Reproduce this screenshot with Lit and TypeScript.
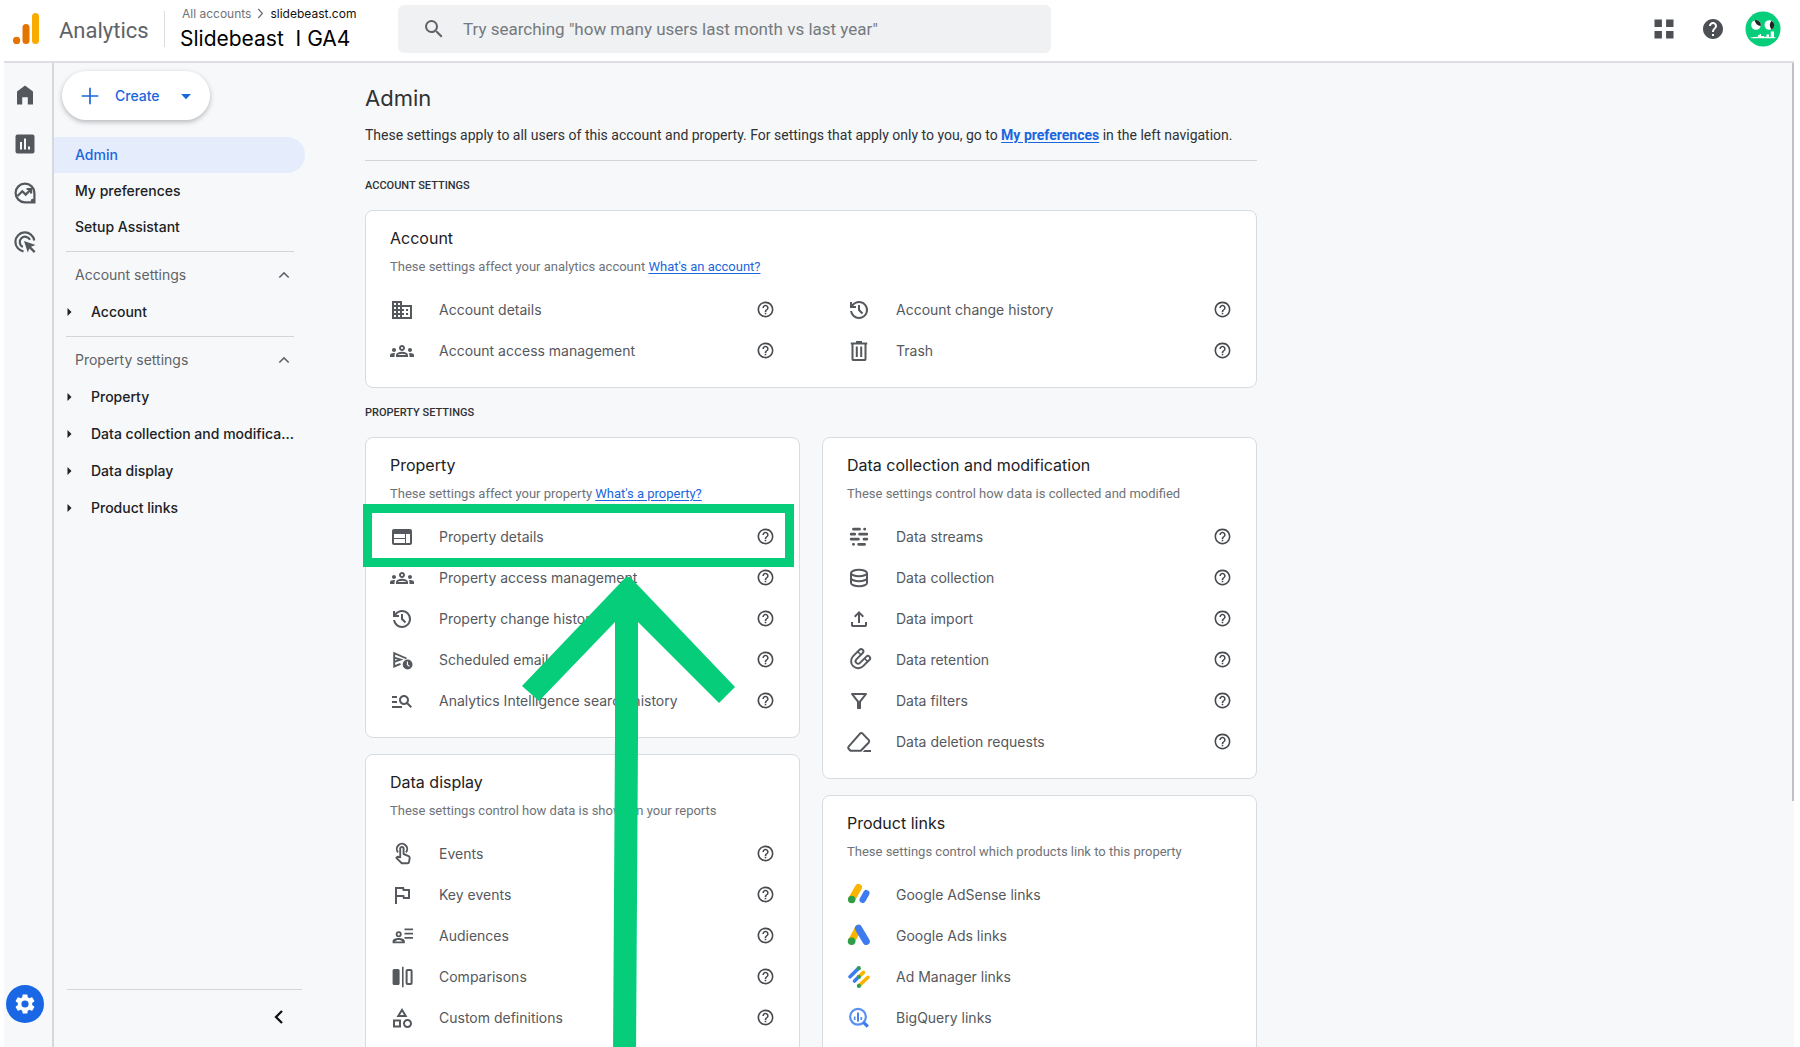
import { LitElement, html, svg, css, nothing, TemplateResult, SVGTemplateResult } from "lit";
import { customElement, property } from "lit/decorators.js";

/* Glyphs on a 24 x 24 grid. */
const ICONS: Record<string, SVGTemplateResult> = {
  home: svg`<path d="M4 21.5V8.6L12 2.5l8 6.1v12.9h-5.2v-7.2H9.200v7.200z"/>`,
  reports: svg`<path fill-rule="evenodd" d="M4.500 2.500h15a2 2 0 0 1 2 2v15a2 2 0 0 1-2 2h-15a2 2 0 0 1-2-2v-15a2 2 0 0 1 2-2zM7 10v7.500h2V10zm4-3.500v11h2v-11zm4 8v3h2v-3z"/>`,
  explore: svg`<g fill="none" stroke="currentColor" stroke-width="2.200"><path d="M12 2.600a9.400 9.400 0 1 0 0 18.800h9.400V12A9.400 9.400 0 0 0 12 2.600z"/><path d="M4.500 15l4.800-4.800 3.400 3.400 5-5.200M13.600 8h4.500v4.500"/></g><circle cx="19.600" cy="19.600" r="1.800"/>`,
  advertising: svg`<g fill="none" stroke="currentColor" stroke-width="2.200"><path d="M10.500 21.300A9.500 9.500 0 1 1 21.300 10.500"/><path d="M9.800 17A5.400 5.400 0 1 1 17 9.800"/></g><path d="M11 11l11.500 4-4.500 1.800 4.500 4.500-1.600 1.600-4.500-4.500-1.600 4.200z"/>`,
  gear: svg`<path fill-rule="evenodd" d="M19.140 12.940c.040-.3.060-.610.060-.940 0-.320-.020-.640-.070-.940l2.030-1.580a.49.49 0 0 0 .12-.61l-1.920-3.320a.488.488 0 0 0-.59-.22l-2.390.96c-.5-.38-1.030-.7-1.620-.94l-.36-2.540a.484.484 0 0 0-.48-.41h-3.840c-.24 0-.43.17-.47.41l-.36 2.540c-.59.24-1.130.57-1.620.94l-2.390-.96c-.22-.08-.47 0-.59.22L2.740 8.870c-.12.21-.08.47.12.61l2.030 1.580c-.05.3-.09.63-.09.94s.02.64.07.94l-2.030 1.580a.49.49 0 0 0-.12.61l1.920 3.320c.12.22.37.29.59.22l2.390-.96c.5.38 1.030.7 1.620.94l.36 2.540c.05.24.24.41.48.41h3.840c.24 0 .44-.17.47-.41l.36-2.540c.59-.24 1.130-.56 1.620-.94l2.390.96c.22.08.47 0 .59-.22l1.920-3.320c.12-.22.07-.47-.12-.61l-2.010-1.580zM12 15.600A3.600 3.600 0 1 1 12 8.400a3.600 3.600 0 0 1 0 7.200z"/>`,
  search: svg`<path d="M15.500 14h-.79l-.28-.27A6.471 6.471 0 0 0 16 9.500 6.500 6.500 0 1 0 9.500 16c1.610 0 3.090-.59 4.230-1.570l.27.28v.79l5 4.990L20.490 19l-4.990-5zm-6 0C7.010 14 5 11.990 5 9.500S7.010 5 9.500 5 14 7.010 14 9.500 11.990 14 9.500 14z"/>`,
  apps: svg`<path d="M2.500 2.500h7.400v7.400H2.500zM14.100 2.500h7.400v7.400h-7.400zM2.500 14.100h7.400v7.400H2.500zM14.100 14.100h7.400v7.400h-7.400z"/>`,
  helpFilled: svg`<path d="M12 2C6.480 2 2 6.480 2 12s4.480 10 10 10 10-4.480 10-10S17.520 2 12 2zm1 17h-2v-2h2v2zm2.070-7.750l-.9.920C13.450 12.900 13 13.500 13 15h-2v-.5c0-1.100.45-2.100 1.170-2.830l1.240-1.260c.37-.36.59-.86.59-1.410 0-1.100-.9-2-2-2s-2 .9-2 2H8c0-2.210 1.790-4 4-4s4 1.790 4 4c0 .88-.36 1.680-.93 2.250z"/>`,
  help: svg`<path d="M11 18h2v-2h-2v2zm1-16C6.480 2 2 6.480 2 12s4.480 10 10 10 10-4.480 10-10S17.520 2 12 2zm0 18c-4.410 0-8-3.590-8-8s3.590-8 8-8 8 3.590 8 8-3.590 8-8 8zm0-14c-2.210 0-4 1.790-4 4h2c0-1.100.9-2 2-2s2 .9 2 2c0 2-3 1.750-3 5h2c0-2.250 3-2.500 3-5 0-2.210-1.790-4-4-4z"/>`,
  plus: svg`<path d="M11 2h2v9h9v2h-9v9h-2v-9H2v-2h9z"/>`,
  caretDown: svg`<path d="M3.500 8.500h17L12 17.500z"/>`,
  caretRight: svg`<path d="M7 4l8 8-8 8z"/>`,
  chevronUp: svg`<path d="M12 7.500l-7 7L6.500 16l5.500-5.500 5.500 5.500 1.500-1.500z"/>`,
  chevronLeft: svg`<path fill="none" stroke="currentColor" stroke-width="3.400" d="M16.500 3l-9 9 9 9"/>`,
  chevronRight: svg`<path fill="none" stroke="currentColor" stroke-width="3.500" d="M6 0l11 12L6 24"/>`,
  building: svg`<path d="M12 7V3H2v18h20V7H12zM6 19H4v-2h2v2zm0-4H4v-2h2v2zm0-4H4V9h2v2zm0-4H4V5h2v2zm4 12H8v-2h2v2zm0-4H8v-2h2v2zm0-4H8V9h2v2zm0-4H8V5h2v2zm10 12h-8v-2h2v-2h-2v-2h2v-2h-2V9h8v10zm-2-8h-2v2h2v-2zm0 4h-2v2h2v-2z"/>`,
  groups: svg`<path d="M4 13c1.100 0 2-.9 2-2s-.9-2-2-2-2 .9-2 2 .9 2 2 2zm1.130 1.100c-.37-.06-.74-.1-1.130-.1-.99 0-1.930.21-2.780.58C.48 14.900 0 15.620 0 16.430V18h4.500v-1.610c0-.83.23-1.610.63-2.290zM20 13c1.100 0 2-.9 2-2s-.9-2-2-2-2 .9-2 2 .9 2 2 2zm4 3.430c0-.81-.48-1.530-1.220-1.850-.85-.37-1.790-.58-2.780-.58-.39 0-.76.04-1.130.1.4.68.63 1.460.63 2.290V18H24v-1.570zm-7.760-2.780c-1.170-.52-2.610-.9-4.240-.9-1.630 0-3.070.39-4.240.9C6.680 14.130 6 15.210 6 16.390V18h12v-1.610c0-1.180-.68-2.260-1.760-2.740zM8.070 16c.09-.23.13-.39.91-.69.97-.38 1.990-.56 3.020-.56s2.050.18 3.020.56c.77.3.81.46.91.69H8.070zM12 8c.55 0 1 .45 1 1s-.45 1-1 1-1-.45-1-1 .45-1 1-1m0-2c-1.660 0-3 1.340-3 3s1.340 3 3 3 3-1.340 3-3-1.340-3-3-3z"/>`,
  history: svg`<path d="M12 21q-3.450 0-6.013-2.288T3.050 13H5.100q.35 2.600 2.313 4.300T12 19q2.925 0 4.963-2.037T19 12t-2.037-4.963T12 5q-1.725 0-3.225.8T6.250 8H9v2H3V4h2v2.350q1.275-1.600 3.113-2.475T12 3q1.875 0 3.513.713t2.850 1.924t1.925 2.850T21 12t-.712 3.513t-1.925 2.850t-2.850 1.925T12 21m2.800-4.800L11 12.400V7h2v4.600l3.200 3.200z"/>`,
  trash: svg`<path d="M6.500 22q-.825 0-1.412-.587T4.500 20V5.500H3.800v-2H9v-1.500h6v1.500h5.200v2h-.7V20q0 .825-.587 1.413T17.500 22zM17.500 5.500h-11V20h11zM8.800 18h2V7.500h-2zm4.400 0h2V7.500h-2z"/>`,
  web: svg`<path d="M20 4H4c-1.100 0-1.990.9-1.990 2L2 18c0 1.100.9 2 2 2h16c1.100 0 2-.9 2-2V6c0-1.100-.9-2-2-2zm-5 14H4v-4h11v4zm0-5H4V9h11v4zm5 5h-4V9h4v9z"/>`,
  scheduled: svg`<path fill="none" stroke="currentColor" stroke-width="1.900" d="M16.500 10.500L4.200 5.200v13.300l6.300-2.600M4.200 9.700l6.300 1.900-6.300 2.200"/><circle cx="17.600" cy="16.500" r="4.900"/><path fill="none" stroke="#fff" stroke-width="1.100" d="M17.400 13.500v3.200l2 1.700"/>`,
  searchList: svg`<path d="M7 9H2V7h5v2zm0 3H2v2h5v-2zm13.590 7l-3.830-3.830c-.8.52-1.740.83-2.760.83-2.760 0-5-2.240-5-5s2.240-5 5-5 5 2.240 5 5c0 1.020-.31 1.960-.83 2.750L22 17.590 20.590 19zM17 11c0-1.650-1.350-3-3-3s-3 1.350-3 3 1.350 3 3 3 3-1.350 3-3zM2 19h10v-2H2v2z"/>`,
  streams: svg`<path fill="none" stroke="currentColor" stroke-width="2.800" stroke-linecap="round" d="M6.500 4.200h6M17.600 4.200h.2M4.200 9.200h3.500M12.600 9.200h7.200M4.200 14.200h7.200M17 14.200h2.800M6.400 19.300h.2M11.600 19.300h6"/>`,
  database: svg`<g fill="none" stroke="currentColor" stroke-width="2"><ellipse cx="12" cy="7" rx="8" ry="3.200"/><path d="M4 7v10c0 1.800 3.600 3.200 8 3.200s8-1.400 8-3.200V7M4 12c0 1.800 3.600 3.200 8 3.200s8-1.400 8-3.200"/></g>`,
  upload: svg`<path d="M11 16V7.850l-2.600 2.600L7 9l5-5l5 5l-1.400 1.450l-2.600-2.600V16zm-5 4q-.825 0-1.412-.587T4 18v-3h2v3h12v-3h2v3q0 .825-.587 1.413T18 20z"/>`,
  magnet: svg`<g fill="none" stroke-linecap="round" transform="rotate(45 12 12)"><path stroke="currentColor" stroke-width="6.400" d="M7.400 4.400v9a4.800 4.800 0 0 0 9.600 0V4.400"/><path stroke="#fff" stroke-width="2.600" d="M7.400 4.400v9a4.800 4.800 0 0 0 9.600 0V4.400"/><path stroke="currentColor" stroke-width="1.600" stroke-linecap="butt" d="M5 7h5M14.500 7h5"/></g>`,
  filter: svg`<path d="M11 20q-.425 0-.712-.288T10 19v-6L4.200 5.600q-.375-.5-.112-1.050T5 4h14q.65 0 .913.55T19.800 5.600L14 13v6q0 .425-.288.713T13 20zm1-7.700L16.950 6h-9.900z"/>`,
  eraser: svg`<path fill="none" stroke="currentColor" stroke-width="2" stroke-linejoin="round" d="M3.500 20.800L1.600 18.800q-.9-1.100 0-2.200L13 3.600q1.300-1.200 2.600 0l6.200 6.500q.9 1.200 0 2.400L13.800 20.800z"/><path d="M17.500 19.900h6.500v2h-8.300z"/>`,
  touch: svg`<g fill="none" stroke="currentColor" stroke-width="1.900" stroke-linejoin="round"><path d="M8 10.300A5.200 5.200 0 1 1 16 10.300"/><path d="M10.200 15.300V6.600a1.700 1.700 0 0 1 3.400 0v5.400l5 2.100q1.300.6 1.100 2l-.7 4q-.2 1.100-1.300 1.100h-5.900L6.300 15.900l1.200-1.100z"/></g>`,
  flag: svg`<path d="M5 21V4h9l.4 2H20v10h-7l-.4-2H7v7zm9.650-7H18V8h-5.250l-.4-2H7v6h7.250z"/>`,
  audiences: svg`<circle cx="8.700" cy="10.200" r="2.100" fill="none" stroke="currentColor" stroke-width="1.800"/><path fill-rule="evenodd" d="M2.600 19.200v-2c0-2 3-3.200 6.100-3.200s6.100 1.200 6.100 3.200v2zM5 17.500h7.400c-.6-.9-2-1.500-3.700-1.500s-3.100.6-3.700 1.500z"/><path d="M14.500 4.500H23v1.800h-8.500zM14.500 8.700H23v1.800h-8.500zM14.500 12.900H23v1.800h-8.500z"/>`,
  compare: svg`<rect x="2.600" y="4" width="7" height="16" rx="1.600"/><path d="M12 1.800h1.600v20.400H12z"/><rect x="16.600" y="5" width="5" height="14" rx="1" fill="none" stroke="currentColor" stroke-width="2"/>`,
  shapes: svg`<path d="M12 2l-5.500 9h11L12 2zm0 3.840L13.930 9h-3.870L12 5.840zM17.500 13c-2.490 0-4.500 2.010-4.500 4.500s2.010 4.500 4.500 4.500 4.500-2.010 4.500-4.500-2.010-4.500-4.500-4.500zm0 7c-1.380 0-2.500-1.120-2.500-2.500s1.120-2.500 2.500-2.500 2.500 1.120 2.500 2.500-1.120 2.500-2.500 2.500zM3 21.500h8v-8H3v8zm2-6h4v4H5v-4z"/>`,
  adsense: svg`<g fill="none" stroke-linecap="round"><path stroke="#fbb400" stroke-width="7" d="M11.400 4.400L4.700 16.200"/><path stroke="#3c7cf0" stroke-width="6.400" d="M19.300 10.200l-3.600 6.600"/></g><circle cx="4.700" cy="16.500" r="3.700" fill="#2f9e4a"/>`,
  ads: svg`<g fill="none" stroke-linecap="round"><path stroke="#fbb400" stroke-width="7" d="M11.300 4.500L4.700 16.600"/><path stroke="#3c7cf0" stroke-width="7.200" d="M11.500 4.300l7.700 13"/></g><circle cx="4.600" cy="17.200" r="3.800" fill="#2f9e4a"/>`,
  adManager: svg`<g fill="none" stroke-linecap="round" stroke-width="3.600"><path stroke="#3c7cf0" d="M3 11.700l8.500-8.300"/><path stroke="#fbb400" d="M12 11.600l4.500-4.200M12.400 20.400l8.600-8.100"/><path stroke="#3c7cf0" d="M7.500 16l4-4"/></g><g fill="#2f9e4a"><circle cx="11.800" cy="3.200" r="2.100"/><circle cx="11.900" cy="12" r="2"/><circle cx="11.900" cy="20.900" r="2.100"/></g>`,
  bigQuery: svg`<g fill="none" stroke="#5a90f2"><circle cx="11" cy="10.800" r="7.900" stroke-width="2.200"/><path stroke-width="3.200" stroke="#3c7cf0" d="M16.500 16.400l4.300 4.300"/><path stroke-width="1.700" d="M7.700 10.500v3.500M14.300 11v3"/><path stroke-width="1.900" stroke="#3c7cf0" d="M11 6.500v9"/></g>`,
};

@customElement("ga-icon")
class GaIcon extends LitElement {
  @property() name = "help";
  static styles = css`
    :host { display: inline-flex; flex: none; width: 24px; height: 24px; }
    .glyph { display: block; width: 100%; height: 100%; fill: currentColor; overflow: visible; }
  `;
  render() {
    return html`<svg class="glyph" viewBox="0 0 24 24" aria-hidden="true">${ICONS[this.name]}</svg>`;
  }
}

type Item = { icon: string; label: string };

@customElement("settings-card")
class SettingsCard extends LitElement {
  @property() heading = "";
  @property() note = "";
  @property() linkText = "";
  @property({ attribute: false }) items: Item[] = [];
  @property({ type: Boolean }) wide = false;
  @property({ type: Boolean }) noHelp = false;
  static styles = css`
    :host {
      display: block; box-sizing: border-box; position: relative;
      background: #fff; border: 1px solid #d9dcdf; border-radius: 8px;
      padding: 15px 24px 16px;
    }
    .heading { margin: 0; font: 400 16px/24px Inter, "Liberation Sans", sans-serif; color: #202124; }
    .note { margin: 9px 0 14px; font: 400 13px/16px Roboto, "Liberation Sans", sans-serif; color: #6f7378; white-space: nowrap; }
    .link { color: #1a66dc; text-underline-offset: 2px; }
    .list { list-style: none; margin: 0; padding: 0; display: grid; grid-template-columns: 1fr; }
    .list.wide { grid-template-columns: 1fr 1fr; column-gap: 72px; }
    .item { display: flex; align-items: center; height: 41px; }
    .label {
      display: flex; align-items: center; gap: 25px; flex: 1; color: #55585d; text-decoration: none;
      font: 400 14px/20px Inter, "Liberation Sans", sans-serif;
    }
    .help { display: flex; border: 0; padding: 0; background: none; color: #46494d; }
    .help-icon { width: 19px; height: 19px; }
  `;
  render() {
    return html`
      <h3 class="heading">${this.heading}</h3>
      <p class="note">${this.note}${this.linkText ? html` <a class="link" href="#help">${this.linkText}</a>` : nothing}</p>
      <ul class="list ${this.wide ? "wide" : ""}">
        ${this.items.map((i) => html`
          <li class="item">
            <a class="label" href="#item"><ga-icon name=${i.icon}></ga-icon>${i.label}</a>
            ${this.noHelp ? nothing : html`<button class="help" aria-label="Help"><ga-icon class="help-icon" name="help"></ga-icon></button>`}
          </li>`)}
      </ul>
      <slot></slot>
    `;
  }
}

const ACCOUNT: Item[] = [
  { icon: "building", label: "Account details" },
  { icon: "history", label: "Account change history" },
  { icon: "groups", label: "Account access management" },
  { icon: "trash", label: "Trash" },
];
const PROPERTY: Item[] = [
  { icon: "web", label: "Property details" },
  { icon: "groups", label: "Property access management" },
  { icon: "history", label: "Property change history" },
  { icon: "scheduled", label: "Scheduled emails" },
  { icon: "searchList", label: "Analytics Intelligence search history" },
];
const DISPLAY: Item[] = [
  { icon: "touch", label: "Events" },
  { icon: "flag", label: "Key events" },
  { icon: "audiences", label: "Audiences" },
  { icon: "compare", label: "Comparisons" },
  { icon: "shapes", label: "Custom definitions" },
];
const COLLECTION: Item[] = [
  { icon: "streams", label: "Data streams" },
  { icon: "database", label: "Data collection" },
  { icon: "upload", label: "Data import" },
  { icon: "magnet", label: "Data retention" },
  { icon: "filter", label: "Data filters" },
  { icon: "eraser", label: "Data deletion requests" },
];
const LINKS: Item[] = [
  { icon: "adsense", label: "Google AdSense links" },
  { icon: "ads", label: "Google Ads links" },
  { icon: "adManager", label: "Ad Manager links" },
  { icon: "bigQuery", label: "BigQuery links" },
];

@customElement("app-root")
class AppRoot extends LitElement {
  static styles = css`
    :host {
      display: flex; flex-direction: column; box-sizing: border-box; height: 100vh; overflow: hidden;
      padding: 0 6px 0 4px; background: #fff; color: #202124;
      font: 400 14px/20px Inter, "Liberation Sans", sans-serif;
    }
    button { border: 0; background: none; padding: 0; font: inherit; color: inherit; }
    a { color: inherit; text-decoration: none; }

    .top { display: flex; align-items: center; box-sizing: border-box; height: 63px; flex: none; padding-bottom: 4px; border-bottom: 2px solid #dcdee3; }
    .brand { display: flex; align-items: center; gap: 19px; padding-left: 9px; width: 160px; box-sizing: border-box; flex: none; }
    .logo { width: 27px; height: 32px; flex: none; }
    .product { padding-top: 4px; font: 400 22px/32px Roboto, "Liberation Sans", sans-serif; color: #5f6368; }
    .divider { width: 1px; height: 36px; background: #dadce0; flex: none; }
    .place { width: 233px; box-sizing: border-box; padding: 2px 0 0 15px; white-space: nowrap; flex: none; }
    .crumbs { display: flex; align-items: center; gap: 5px; padding-left: 2px; margin-bottom: 2px; font-size: 12px; line-height: 16px; color: #6f7377; }
    .crumb-icon { width: 9px; height: 9px; }
    .here { color: #111; }
    .site { font-size: 21px; line-height: 30px; color: #000; }
    .search { display: flex; align-items: center; gap: 17px; width: 653px; height: 48px; box-sizing: border-box; padding: 0 24px; background: #f0f1f2; border-radius: 6px; color: #5f6368; }
    .query { flex: 1; min-width: 0; border: 0; padding: 0; outline: 0; background: none; font: 400 17px/24px Roboto, "Liberation Sans", sans-serif; color: #757a7f; }
    .query::placeholder { color: #757a7f; opacity: 1; }
    .tools { margin-left: auto; display: flex; align-items: center; gap: 20px; padding-right: 13px; color: #4c4f53; }
    .tool-pair { display: flex; gap: 25px; }
    .tool { display: flex; }
    .avatar { width: 36px; height: 36px; display: block; }

    .body { display: flex; flex: 1; min-height: 0; background: #f6f8fa; }
    .thumb { flex: none; width: 2px; height: 75%; background: #bfc1c4; }
    .rail { display: flex; flex-direction: column; align-items: center; justify-content: space-between; width: 50px; box-sizing: border-box; flex: none; border-right: 2px solid #d6d8dc; padding: 20px 6px 24px 0; color: #54575c; }
    .rail-links { display: flex; flex-direction: column; gap: 25px; }
    .rail-link { display: flex; }
    .gear { display: flex; align-items: center; justify-content: center; width: 38px; height: 38px; border-radius: 50%; background: #1967e4; color: #fff; }

    .side { display: flex; flex-direction: column; width: 251px; flex: none; }
    .create { display: flex; align-items: center; align-self: flex-start; margin: 8px 0 17px 8px; height: 49px; width: 148px; padding: 0 17px 0 18px; box-sizing: border-box; border-radius: 25px; background: #fff; box-shadow: 0 2px 5px rgba(60, 64, 67, .35); color: #1a66dc; font-weight: 500; }
    .create-plus { width: 20px; height: 20px; }
    .create-text { flex: 1; text-align: left; padding-left: 15px; }
    .create-caret { width: 14px; height: 14px; }
    .nav { display: flex; flex-direction: column; font-weight: 500; }
    .row { display: flex; align-items: center; height: 36px; padding-left: 21px; }
    .row.on { background: #e5edfd; color: #1a66dc; border-radius: 0 18px 18px 0; }
    .rule { border: 0; border-top: 1px solid #d3d5d8; margin: 6px 11px 5px 12px; }
    .group { display: flex; align-items: center; justify-content: space-between; height: 36px; padding: 0 12px 0 21px; color: #5f6368; font-weight: 400; text-align: left; }
    .chevron { width: 18px; height: 18px; }
    .row.sub { height: 37px; padding-left: 10px; gap: 15px; white-space: nowrap; }
    .twist { width: 12px; height: 12px; }
    .collapse { margin-top: auto; padding: 0 3px 0 13px; }
    .collapse-rule { border: 0; border-top: 1px solid #d3d5d8; margin: 0; }
    .collapse-button { display: flex; margin: 19px 15px 22px auto; color: #111; }
    .collapse-icon { width: 16px; height: 16px; }

    .main { flex: 1; min-width: 0; overflow: hidden; padding: 21px 32px 0 60px; }
    .content { max-width: 892px; }
    .title { margin: 0; font-size: 22px; line-height: 28px; font-weight: 400; color: #303134; }
    .intro { margin: 13px 0 15px; font: 400 14px/20px Roboto, "Liberation Sans", sans-serif; color: #303134; }
    .strong { color: #1a66dc; font-weight: 700; text-decoration: underline; text-underline-offset: 2px; }
    .line { border: 0; border-top: 1px solid #d3d5d8; margin: 0; }
    .section { margin: 17px 0 16px; font: 500 11px/16px Roboto, "Liberation Sans", sans-serif; color: #303134; }
    .columns { display: grid; grid-template-columns: 1fr 1fr; gap: 22px; align-items: start; }
    .stack { display: flex; flex-direction: column; gap: 16px; min-width: 0; }
    .marked { z-index: 1; }
    .frame { position: absolute; left: -3px; right: 5px; top: 66px; height: 63px; box-sizing: border-box; border: 9px solid #06cd79; pointer-events: none; }
    .arrow { position: absolute; left: 156px; top: 139px; width: 214px; height: 480px; fill: #06cd79; pointer-events: none; }
  `;

  private row(label: string, on = false): TemplateResult {
    return html`<a class="row ${on ? "on" : ""}" href="#nav">${label}</a>`;
  }
  private sub(label: string): TemplateResult {
    return html`<a class="row sub" href="#nav"><ga-icon class="twist" name="caretRight"></ga-icon>${label}</a>`;
  }
  private group(label: string): TemplateResult {
    return html`<hr class="rule" /><button class="group" aria-expanded="true">${label}<ga-icon class="chevron" name="chevronUp"></ga-icon></button>`;
  }

  render() {
    return html`
      <header class="top">
        <div class="brand">
          <svg class="logo" viewBox="0 0 27 32" aria-hidden="true">
            <rect x="19" y="0" width="7" height="31" rx="3.500" fill="#f9ab00"/>
            <rect x="9.500" y="11" width="7" height="20" rx="3.500" fill="#e37400"/>
            <circle cx="3.600" cy="27.400" r="3.600" fill="#e37400"/>
          </svg>
          <span class="product">Analytics</span>
        </div>
        <span class="divider"></span>
        <div class="place">
          <div class="crumbs">All accounts<ga-icon class="crumb-icon" name="chevronRight"></ga-icon><span class="here">slidebeast.com</span></div>
          <div class="site">Slidebeast&nbsp; I GA4</div>
        </div>
        <label class="search">
          <ga-icon name="search"></ga-icon>
          <input class="query" type="search" aria-label="Search" placeholder='Try searching "how many users last month vs last year"' />
        </label>
        <div class="tools">
          <div class="tool-pair">
            <button class="tool" aria-label="Apps"><ga-icon name="apps"></ga-icon></button>
            <button class="tool" aria-label="Help"><ga-icon name="helpFilled"></ga-icon></button>
          </div>
          <button class="tool" aria-label="Profile">
            <svg class="avatar" viewBox="0 0 36 36" aria-hidden="true">
              <circle cx="18" cy="18" r="17.500" fill="#06cd79"/>
              <circle cx="11" cy="14" r="4.800" fill="#fff"/><circle cx="24.300" cy="14" r="4.800" fill="#fff"/>
              <path fill="#222" d="M9.600 9.300a4.900 4.900 0 0 1 6.100 5.800q-5-.8-6.100-5.800zM26.500 9.700a4.800 4.800 0 0 1 0 8.700q-3.500-4.300 0-8.700z"/>
              <path fill="#fff" d="M5 26.700l4-.7 4-.3v-1.500h1.600V23H16v2h3v.7h2.500v-2.200H24V26h1.700v-5.500H29V26l2 .7-1.500.6H6.500z"/>
            </svg>
          </button>
        </div>
      </header>
      <div class="body">
        <nav class="rail" aria-label="Sections">
          <div class="rail-links">
            <a class="rail-link" href="#home" aria-label="Home"><ga-icon name="home"></ga-icon></a>
            <a class="rail-link" href="#reports" aria-label="Reports"><ga-icon name="reports"></ga-icon></a>
            <a class="rail-link" href="#explore" aria-label="Explore"><ga-icon name="explore"></ga-icon></a>
            <a class="rail-link" href="#advertising" aria-label="Advertising"><ga-icon name="advertising"></ga-icon></a>
          </div>
          <a class="gear" href="#admin" aria-label="Admin"><ga-icon name="gear"></ga-icon></a>
        </nav>
        <aside class="side">
          <button class="create"><ga-icon class="create-plus" name="plus"></ga-icon><span class="create-text">Create</span><ga-icon class="create-caret" name="caretDown"></ga-icon></button>
          <nav class="nav" aria-label="Admin">
            ${this.row("Admin", true)} ${this.row("My preferences")} ${this.row("Setup Assistant")}
            ${this.group("Account settings")} ${this.sub("Account")}
            ${this.group("Property settings")} ${this.sub("Property")} ${this.sub("Data collection and modifica...")}
            ${this.sub("Data display")} ${this.sub("Product links")}
          </nav>
          <div class="collapse">
            <hr class="collapse-rule" />
            <button class="collapse-button" aria-label="Collapse"><ga-icon class="collapse-icon" name="chevronLeft"></ga-icon></button>
          </div>
        </aside>
        <main class="main">
          <div class="content">
            <h1 class="title">Admin</h1>
            <p class="intro">These settings apply to all users of this account and property. For settings that apply only to you, go to <a class="strong" href="#preferences">My preferences</a> in the left navigation.</p>
            <hr class="line" />
            <h2 class="section">ACCOUNT SETTINGS</h2>
            <settings-card wide heading="Account" note="These settings affect your analytics account" linkText="What's an account?" .items=${ACCOUNT}></settings-card>
            <h2 class="section">PROPERTY SETTINGS</h2>
            <div class="columns">
              <div class="stack">
                <settings-card class="marked" heading="Property" note="These settings affect your property" linkText="What's a property?" .items=${PROPERTY}>
                  <div class="frame"></div>
                  <svg class="arrow" viewBox="0 0 214 480" aria-hidden="true">
                    <path d="M104 0h4L213 110l-16 16L116 45V160l-2 320H91l2-320V45L17 124 0 109z"/>
                  </svg>
                </settings-card>
                <settings-card heading="Data display" note="These settings control how data is shown in your reports" .items=${DISPLAY}></settings-card>
              </div>
              <div class="stack">
                <settings-card heading="Data collection and modification" note="These settings control how data is collected and modified" .items=${COLLECTION}></settings-card>
                <settings-card noHelp heading="Product links" note="These settings control which products link to this property" .items=${LINKS}></settings-card>
              </div>
            </div>
          </div>
        </main>
        <div class="thumb"></div>
      </div>
    `;
  }
}
